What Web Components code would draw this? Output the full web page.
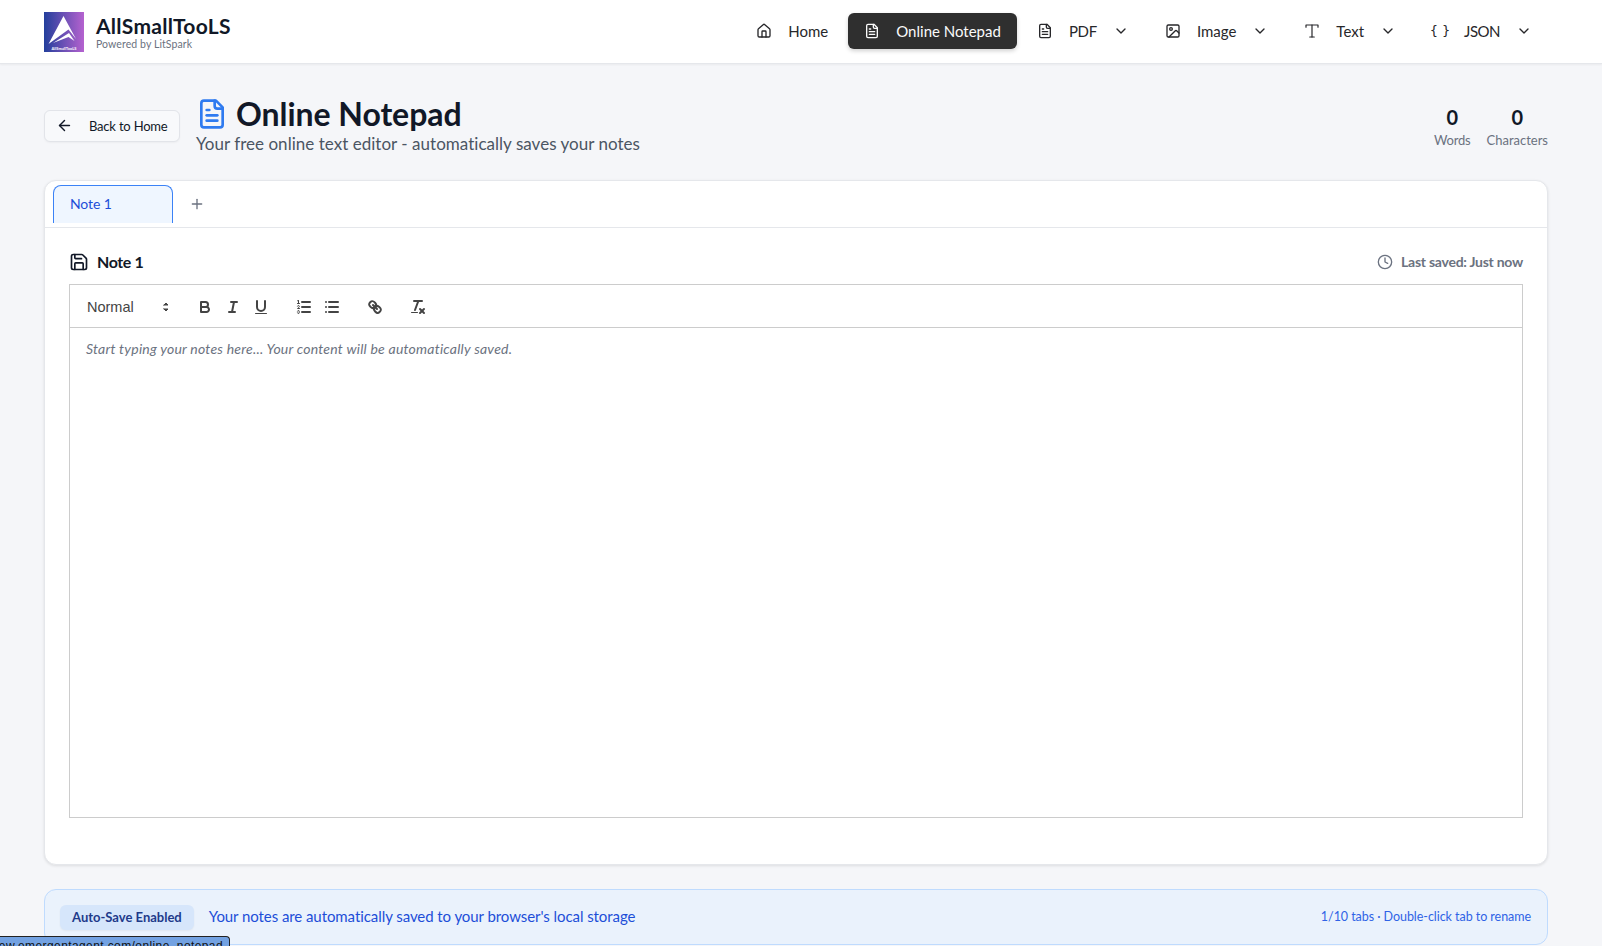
<!DOCTYPE html>
<html lang="en">
<head>
<meta charset="utf-8">
<title>Online Notepad</title>
<style>
  html, body { margin: 0; height: 946px; overflow: hidden; }
  body { background: #f5f6f9; font-family: Lato, "Open Sans", sans-serif; color: #111827; }
</style>
</head>
<body>
<ast-header></ast-header>
<ast-main></ast-main>
<ast-url-hint>preview.emergentagent.com/online_notepad</ast-url-hint>

<script>
(() => {
  "use strict";

  // lucide style outline icons
  const icons = {
    home: '<path d="M15 21v-8a1 1 0 0 0-1-1h-4a1 1 0 0 0-1 1v8"/><path d="M3 10a2 2 0 0 1 .709-1.528l7-5.999a2 2 0 0 1 2.582 0l7 5.999A2 2 0 0 1 21 10v9a2 2 0 0 1-2 2H5a2 2 0 0 1-2-2z"/>',
    file: '<path d="M15 2H6a2 2 0 0 0-2 2v16a2 2 0 0 0 2 2h12a2 2 0 0 0 2-2V7Z"/><path d="M14 2v4a2 2 0 0 0 2 2h4"/><path d="M10 9H8"/><path d="M16 13H8"/><path d="M16 17H8"/>',
    image: '<rect width="18" height="18" x="3" y="3" rx="2"/><circle cx="9" cy="9" r="2"/><path d="m21 15-3.086-3.086a2 2 0 0 0-2.828 0L6 21"/>',
    type: '<path d="M4 7V4h16v3"/><path d="M9 20h6"/><path d="M12 4v16"/>',
    chevron: '<path d="m6 9 6 6 6-6"/>',
    arrow: '<path d="m12 19-7-7 7-7"/><path d="M19 12H5"/>',
    plus: '<path d="M5 12h14"/><path d="M12 5v14"/>',
    save: '<path d="M15.2 3a2 2 0 0 1 1.4.6l3.8 3.8a2 2 0 0 1 .6 1.4V19a2 2 0 0 1-2 2H5a2 2 0 0 1-2-2V5a2 2 0 0 1 2-2z"/><path d="M17 21v-7a1 1 0 0 0-1-1H8a1 1 0 0 0-1 1v7"/><path d="M7 3v4a1 1 0 0 0 1 1h7"/>',
    clock: '<circle cx="12" cy="12" r="10"/><polyline points="12 6 12 12 16 14"/>',
  };

  function icon(name, size, width = 2) {
    return `<svg width="${size}" height="${size}" viewBox="0 0 24 24" fill="none" stroke="currentColor" stroke-width="${width}" stroke-linecap="round" stroke-linejoin="round">${icons[name]}</svg>`;
  }

  class AstLogo extends HTMLElement {
    connectedCallback() {
      const shadow = this.attachShadow({ mode: "open" });
      shadow.innerHTML = `
        <style>
          :host { display: flex; align-items: center; gap: 12px; }
          .name { font-size: 21px; font-weight: 700; line-height: 24px; color: #111827; letter-spacing: .28px; }
          .by { font-size: 10.5px; line-height: 12px; color: #6b7280; letter-spacing: .09px; }
        </style>
        <svg width="40" height="40" viewBox="0 0 40 40">
          <defs>
            <linearGradient id="g" x1="0" x2="1" y1="0" y2="0">
              <stop offset="0" stop-color="#233f9c"/>
              <stop offset="1" stop-color="#b562cf"/>
            </linearGradient>
          </defs>
          <rect width="40" height="40" fill="url(#g)"/>
          <path d="M19.5 4 32 27 24.5 17.5 4.5 32Z" fill="#fff"/>
          <path d="M9 31 25 21 30.5 29 24.5 25Z" fill="#fff"/>
          <text x="20" y="38" font-size="4" font-weight="700" fill="#fff" text-anchor="middle" font-family="Lato, sans-serif">AllSmallTooLS</text>
        </svg>
        <div>
          <div class="name">AllSmallTooLS</div>
          <div class="by">Powered by LitSpark</div>
        </div>`;
    }
  }

  class AstNavItem extends HTMLElement {
    connectedCallback() {
      const shadow = this.attachShadow({ mode: "open" });
      const name = this.getAttribute("icon");
      const glyph = name === "braces"
        ? '<span class="braces">{ }</span>'
        : icon(name, name === "type" ? 18 : 16, name === "type" ? 1.6 : 2);
      const caret = this.hasAttribute("menu") ? icon("chevron", 16) : "";
      shadow.innerHTML = `
        <style>
          :host { display: flex; align-items: center; gap: 16px; height: 36px; padding: 0 16px; border-radius: 6px; font-size: 15px; color: #27272a; white-space: nowrap; }
          :host([active]) { background: #2f2f2f; color: #fafafa; box-shadow: 0 2px 4px rgba(0,0,0,.18); }
          svg { flex: none; }
          .glyph { display: flex; width: 16px; justify-content: center; }
          .braces { font-family: "DejaVu Sans", sans-serif; font-size: 13px; line-height: 16px; white-space: nowrap; letter-spacing: 0; }
        </style>
        <span class="glyph">${glyph}</span><slot></slot>${caret}`;
    }
  }

  class AstHeader extends HTMLElement {
    connectedCallback() {
      const shadow = this.attachShadow({ mode: "open" });
      shadow.innerHTML = `
        <style>
          :host { display: flex; justify-content: space-between; align-items: center; height: 64px; box-sizing: border-box; padding: 0 54px 0 44px; background: #fff; border-bottom: 1px solid #e5e7eb; box-shadow: 0 1px 2px rgba(0,0,0,.05); }
          nav { display: flex; gap: 4px; margin-bottom: 2px; }
        </style>
        <ast-logo></ast-logo>
        <nav>
          <ast-nav-item icon="home">Home</ast-nav-item>
          <ast-nav-item icon="file" active>Online Notepad</ast-nav-item>
          <ast-nav-item icon="file" menu style="letter-spacing:-.3px">PDF</ast-nav-item>
          <ast-nav-item icon="image" menu>Image</ast-nav-item>
          <ast-nav-item icon="type" menu>Text</ast-nav-item>
          <ast-nav-item icon="braces" menu style="letter-spacing:-.5px">JSON</ast-nav-item>
        </nav>`;
    }
  }

  class AstStat extends HTMLElement {
    connectedCallback() {
      const shadow = this.attachShadow({ mode: "open" });
      shadow.innerHTML = `
        <style>
          :host { display: block; text-align: center; }
          .n { font-size: 20px; font-weight: 700; line-height: 28px; color: #111827; }
          .l { font-size: 13px; line-height: 18px; color: #6b7280; }
        </style>
        <div class="n">${this.getAttribute("value")}</div>
        <div class="l"><slot></slot></div>`;
    }
  }

  class AstPageTitle extends HTMLElement {
    connectedCallback() {
      const shadow = this.attachShadow({ mode: "open" });
      shadow.innerHTML = `
        <style>
          :host { display: flex; align-items: center; height: 116px; box-sizing: border-box; padding-top: 7px; }
          .back { display: flex; flex: none; align-items: center; gap: 16px; box-sizing: border-box; width: 136px; height: 32px; margin-right: 16px; padding: 0 0 0 11px; font-size: 13px; color: #111827; letter-spacing: -.2px; background: #f8f9fb; border: 1px solid #e2e4e9; border-radius: 6px; box-shadow: 0 1px 2px rgba(0,0,0,.04); white-space: nowrap; }
          .head { flex: 1; margin-top: -2px; }
          .row { display: flex; align-items: center; gap: 8px; height: 40px; }
          .row svg { color: #2f7bf0; }
          h1 { margin: 0; font-size: 32px; font-weight: 700; line-height: 40px; color: #111827; letter-spacing: -.05px; }
          p { margin: -2px 0 0; font-size: 17px; line-height: 24px; color: #4b5563; letter-spacing: .03px; }
          .stats { display: flex; gap: 16px; }
        </style>
        <div class="back">${icon("arrow", 17)}<span>Back to Home</span></div>
        <div class="head">
          <div class="row">${icon("file", 32, 2)}<h1>Online Notepad</h1></div>
          <p>Your free online text editor - automatically saves your notes</p>
        </div>
        <div class="stats">
          <ast-stat value="0" style="letter-spacing:-.2px">Words</ast-stat>
          <ast-stat value="0">Characters</ast-stat>
        </div>`;
    }
  }

  class AstTabs extends HTMLElement {
    connectedCallback() {
      const shadow = this.attachShadow({ mode: "open" });
      shadow.innerHTML = `
        <style>
          :host { display: flex; align-items: flex-end; height: 47px; box-sizing: border-box; padding: 4px 8px 0; gap: 16px; border-bottom: 1px solid #e5e7eb; }
          .tab { display: flex; align-items: center; box-sizing: border-box; width: 120px; height: 38px; margin-bottom: 4px; padding: 0 0 2px 16px; font-size: 14px; color: #1d4ed8; background: #eff6ff; border: 1px solid #3b82f6; border-top-width: 1.5px; border-bottom: 0; border-radius: 8px 8px 0 0; letter-spacing: -.1px; }
          .add { display: flex; align-self: center; margin-bottom: 5px; color: #6b7280; }
        </style>
        <div class="tab">Note 1</div>
        <div class="add">${icon("plus", 16)}</div>`;
    }
  }

  // same strokes as the quill snow toolbar
  class AstToolbar extends HTMLElement {
    connectedCallback() {
      const shadow = this.attachShadow({ mode: "open" });
      const btn = (body) => `<span class="btn"><svg viewBox="0 0 18 18" width="18" height="18">${body}</svg></span>`;
      shadow.innerHTML = `
        <style>
          :host { display: flex; align-items: center; gap: 15px; box-sizing: border-box; height: 43px; padding: 9px 8px 8px; border-bottom: 1px solid #ccc; color: #444; font: 500 14.5px "Liberation Sans", Arial, sans-serif; }
          .group { display: flex; }
          .picker { display: flex; align-items: center; justify-content: space-between; width: 98px; height: 24px; box-sizing: border-box; padding-left: 9px; }
          .btn { display: block; width: 28px; height: 24px; padding: 3px 5px; box-sizing: border-box; }
          svg { display: block; fill: none; stroke: #444; stroke-width: 2; stroke-linecap: round; stroke-linejoin: round; }
          .f { fill: #444; stroke: none; }
          .t { stroke-width: 1; fill: none; }
        </style>
        <div class="picker"><span>Normal</span>
          <svg viewBox="0 0 18 18" width="18" height="18" style="stroke-width:1;stroke:#444;fill:#444;margin-right:1px"><polygon points="7 11 9 13 11 11 7 11"/><polygon points="7 7 9 5 11 7 7 7"/></svg>
        </div>
        <div class="group">
          ${btn('<path d="M5,4H9.5A2.5,2.5,0,0,1,12,6.5v0A2.5,2.5,0,0,1,9.5,9H5A0,0,0,0,1,5,9V4A0,0,0,0,1,5,4Z"/><path d="M5,9h5.5A2.5,2.5,0,0,1,13,11.5v0A2.5,2.5,0,0,1,10.5,14H5a0,0,0,0,1,0,0V9A0,0,0,0,1,5,9Z"/>')}
          ${btn('<line x1="7" x2="13" y1="4" y2="4"/><line x1="5" x2="11" y1="14" y2="14"/><line x1="8" x2="10" y1="14" y2="4"/>')}
          ${btn('<path d="M5,3V9a4.012,4.012,0,0,0,4,4H9a4.012,4.012,0,0,0,4-4V3"/><rect class="f" height="1" rx=".5" ry=".5" width="12" x="3" y="15"/>')}
        </div>
        <div class="group">
          ${btn('<line x1="7" x2="15" y1="4" y2="4"/><line x1="7" x2="15" y1="9" y2="9"/><line x1="7" x2="15" y1="14" y2="14"/><line class="t" x1="2.5" x2="4.5" y1="5.5" y2="5.5"/><path class="f" d="M3.5,6A0.5,0.5,0,0,1,3,5.5V3.085l-0.276.138A0.5,0.5,0,0,1,2.053,3c-0.124-.247-0.023-0.324.224-0.447l1-.5A0.5,0.5,0,0,1,4,2.5v3A0.5,0.5,0,0,1,3.5,6Z"/><path class="t" d="M4.5,10.5h-2c0-.234,1.85-1.076,1.85-2.234A0.959,0.959,0,0,0,2.5,8.156"/><path class="t" d="M2.5,14.846a0.959,0.959,0,0,0,1.85-.109A0.7,0.7,0,0,0,3.75,14a0.688,0.688,0,0,0,.6-0.736,0.959,0.959,0,0,0-1.85-.109"/>')}
          ${btn('<line x1="6" x2="15" y1="4" y2="4"/><line x1="6" x2="15" y1="9" y2="9"/><line x1="6" x2="15" y1="14" y2="14"/><line x1="3" x2="3" y1="4" y2="4"/><line x1="3" x2="3" y1="9" y2="9"/><line x1="3" x2="3" y1="14" y2="14"/>')}
        </div>
        <div class="group">
          ${btn('<line x1="7" x2="11" y1="7" y2="11"/><path d="M8.9,4.577a3.476,3.476,0,0,1,.36,4.679A3.476,3.476,0,0,1,4.577,8.9C3.185,7.5,2.035,6.4,4.217,4.217S7.5,3.185,8.9,4.577Z"/><path d="M13.423,9.1a3.476,3.476,0,0,0-4.679-.36,3.476,3.476,0,0,0,.36,4.679c1.392,1.392,2.5,2.542,4.679.36S14.815,10.5,13.423,9.1Z"/>')}
        </div>
        <div class="group">
          ${btn('<line x1="5" x2="13" y1="3" y2="3"/><line x1="6" x2="9.35" y1="12" y2="3"/><line x1="11" x2="15" y1="11" y2="15"/><line x1="15" x2="11" y1="11" y2="15"/><rect class="f" height="1" rx=".5" ry=".5" width="7" x="2" y="14"/>')}
        </div>`;
    }
  }

  class AstEditor extends HTMLElement {
    connectedCallback() {
      const shadow = this.attachShadow({ mode: "open" });
      shadow.innerHTML = `
        <style>
          :host { display: block; box-sizing: border-box; height: 534px; border: 1px solid #ccc; }
          .text { padding: 11px 16px; font-size: 14px; font-style: italic; line-height: 19px; color: #6b7280; letter-spacing: .23px; }
        </style>
        <ast-toolbar></ast-toolbar>
        <div class="text">Start typing your notes here... Your content will be automatically saved.</div>`;
    }
  }

  class AstNoteCard extends HTMLElement {
    connectedCallback() {
      const shadow = this.attachShadow({ mode: "open" });
      shadow.innerHTML = `
        <style>
          :host { display: block; height: 685px; box-sizing: border-box; background: #fff; border: 1px solid #e5e7eb; border-radius: 12px; box-shadow: 0 1px 3px rgba(0,0,0,.1); }
          .body { padding: 20px 24px 0; }
          .top { display: flex; justify-content: space-between; align-items: center; height: 26px; margin-bottom: 10px; }
          .title { display: flex; align-items: center; gap: 8px; font-size: 16px; font-weight: 700; color: #111827; letter-spacing: -.4px; }
          .saved { display: flex; align-items: center; gap: 8px; font-size: 14px; font-weight: 700; color: #6b7280; letter-spacing: -.25px; }
          svg { display: block; margin-top: 1px; }
        </style>
        <ast-tabs></ast-tabs>
        <div class="body">
          <div class="top">
            <div class="title">${icon("save", 20)}<span>Note 1</span></div>
            <div class="saved">${icon("clock", 16)}<span>Last saved: Just now</span></div>
          </div>
          <ast-editor></ast-editor>
        </div>`;
    }
  }

  class AstBanner extends HTMLElement {
    connectedCallback() {
      const shadow = this.attachShadow({ mode: "open" });
      shadow.innerHTML = `
        <style>
          :host { display: flex; align-items: center; gap: 15px; height: 56px; box-sizing: border-box; margin-top: 24px; padding: 0 16px 0 15px; background: #eaf2fc; border: 1px solid #bfdbfe; border-radius: 12px; color: #1d4ed8; font-size: 15px; letter-spacing: -.07px; }
          .badge { padding: 0 12px; height: 25px; line-height: 25px; border-radius: 6px; background: #d6e6fb; color: #1e3a8a; font-size: 13px; font-weight: 700; letter-spacing: 0; box-shadow: 0 1px 2px rgba(0,0,0,.05); }
          .msg { flex: 1; padding-bottom: 2px; }
          .hint { font-size: 12.5px; color: #2f63e6; letter-spacing: -.05px; padding-bottom: 2px; }
        </style>
        <span class="badge">Auto-Save Enabled</span>
        <span class="msg">Your notes are automatically saved to your browser's local storage</span>
        <span class="hint">1/10 tabs · Double-click tab to rename</span>`;
    }
  }

  class AstMain extends HTMLElement {
    connectedCallback() {
      const shadow = this.attachShadow({ mode: "open" });
      shadow.innerHTML = `
        <style>
          :host { display: block; padding: 0 54px 0 44px; }
        </style>
        <ast-page-title></ast-page-title>
        <ast-note-card></ast-note-card>
        <ast-banner></ast-banner>`;
    }
  }

  // the browser's link status bubble, lies over the banner
  class AstUrlHint extends HTMLElement {
    connectedCallback() {
      const shadow = this.attachShadow({ mode: "open" });
      shadow.innerHTML = `
        <style>
          :host { position: fixed; left: 0; top: 936px; width: 230px; height: 10px; overflow: hidden; box-sizing: border-box; background: #73a2e2; border: 1px solid #222; border-left: 0; border-bottom: 0; border-radius: 0 4px 0 0; }
          div { position: absolute; right: 6px; top: 2px; font: 12px/14px "Liberation Sans", Arial, sans-serif; letter-spacing: .4px; color: #111; white-space: nowrap; }
        </style>
        <div><slot></slot></div>`;
    }
  }

  customElements.define("ast-logo", AstLogo);
  customElements.define("ast-nav-item", AstNavItem);
  customElements.define("ast-header", AstHeader);
  customElements.define("ast-stat", AstStat);
  customElements.define("ast-page-title", AstPageTitle);
  customElements.define("ast-tabs", AstTabs);
  customElements.define("ast-toolbar", AstToolbar);
  customElements.define("ast-editor", AstEditor);
  customElements.define("ast-note-card", AstNoteCard);
  customElements.define("ast-banner", AstBanner);
  customElements.define("ast-main", AstMain);
  customElements.define("ast-url-hint", AstUrlHint);
})();
</script>
</body>
</html>
